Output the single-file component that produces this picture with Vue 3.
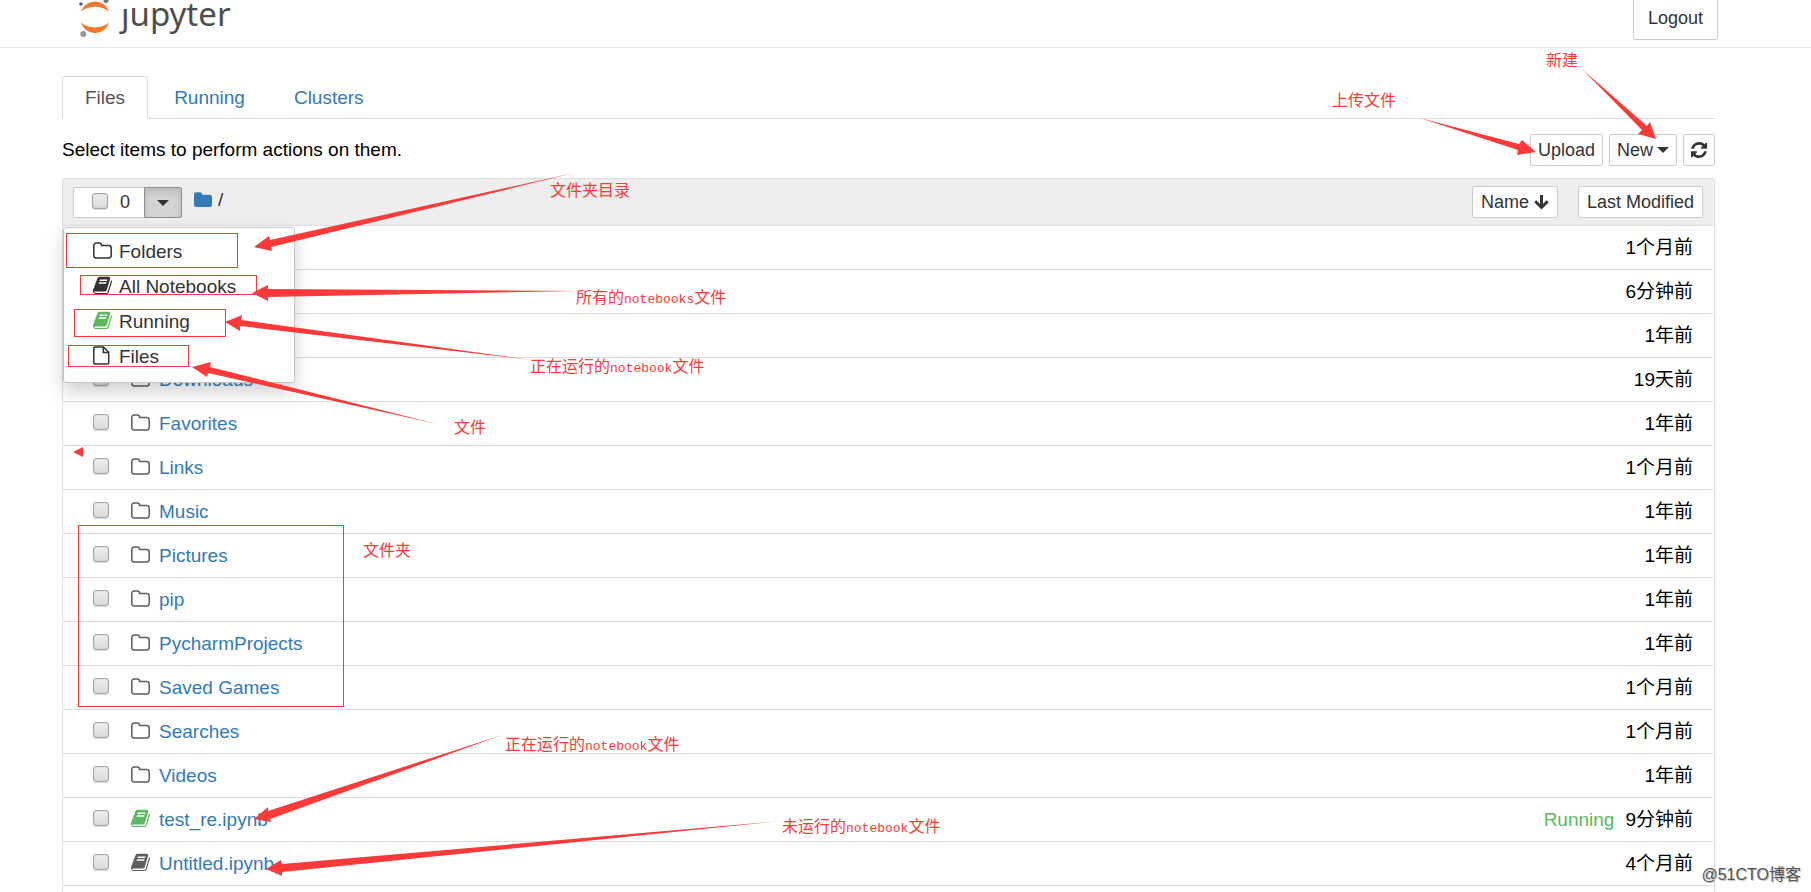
<script setup>
import { ref } from 'vue'

const files = ref([
  { name: '.conda', kind: 'folder', time: '1个月前' },
  { name: 'Contacts', kind: 'folder', time: '6分钟前' },
  { name: 'Desktop', kind: 'folder', time: '1年前' },
  { name: 'Downloads', kind: 'folder', time: '19天前' },
  { name: 'Favorites', kind: 'folder', time: '1年前' },
  { name: 'Links', kind: 'folder', time: '1个月前' },
  { name: 'Music', kind: 'folder', time: '1年前' },
  { name: 'Pictures', kind: 'folder', time: '1年前' },
  { name: 'pip', kind: 'folder', time: '1年前' },
  { name: 'PycharmProjects', kind: 'folder', time: '1年前' },
  { name: 'Saved Games', kind: 'folder', time: '1个月前' },
  { name: 'Searches', kind: 'folder', time: '1个月前' },
  { name: 'Videos', kind: 'folder', time: '1年前' },
  { name: 'test_re.ipynb', kind: 'book', time: '9分钟前', running: true },
  { name: 'Untitled.ipynb', kind: 'book', time: '4个月前' },
])

const filters = [
  { label: 'Folders', kind: 'folder' },
  { label: 'All Notebooks', kind: 'book' },
  { label: 'Running', kind: 'book', running: true },
  { label: 'Files', kind: 'file' },
]
</script>

<template>
  <svg class="defs" aria-hidden="true">
    <symbol id="i-folder" viewBox="0 0 19 17">
      <path d="M.8 3.4A2.4 2.4 0 0 1 3.2 1h3.2a2.2 2.2 0 0 1 2.2 2.2v.4h7.2a2.4 2.4 0 0 1 2.4 2.4v7.6a2.4 2.4 0 0 1-2.4 2.4H3.2a2.4 2.4 0 0 1-2.4-2.4z" fill="none" stroke="currentColor" stroke-width="1.5" />
    </symbol>
    <symbol id="i-book" viewBox="0 -20 1664 1540" preserveAspectRatio="xMinYMid meet">
      <path fill="currentColor" d="M1639 314q40 57 18 129l-275 906q-19 64-76.500 107.500T1183 1500H260q-77 0-148.500-53.500T12 1315q-24-67-2-127 0-4 3-27t4-37q1-8-3-21.500t-3-19.500q2-11 8-21t16.500-23.500T52 1015q23-38 45-91.500t30-91.500q3-10 .5-30t-.5-28q3-11 17-28t17-23q21-36 42-92t25-90q1-9-2.500-32t.5-28q4-13 22-30.500t22-22.500q19-26 42.500-84.500T340 277q1-8-3-25.500t-2-26.500q2-8 9-18t18-23 17-21q8-12 16.500-30.500T411 97t16-36 19.500-32T473 5.500t36-11.500 47.500 5.500L555 2q38-9 51-9h761q74 0 114 56t18 130l-274 906q-36 119-71.500 153.500T1025 1273H156q-27 0-38 15-11 16-1 43 24 70 144 70h923q29 0 56-15.500t35-41.500l300-987q7-22 5-57 38 15 59 43zM575 316q-4 13 2 22.500t20 9.500h608q13 0 25.500-9.500T1247 316l21-64q4-13-2-22.500t-20-9.500H638q-13 0-25.500 9.500T596 252zm-83 256q-4 13 2 22.500t20 9.500h608q13 0 25.500-9.500T1164 572l21-64q4-13-2-22.500t-20-9.500H555q-13 0-25.500 9.500T513 508z" />
    </symbol>
    <symbol id="i-file" viewBox="0 0 17 19" preserveAspectRatio="xMinYMid meet">
      <path d="M1.800 1H10.500L15.700 6.200V16.900A1 1 0 0 1 14.700 18H1.800A1 1 0 0 1 .8 17V2A1 1 0 0 1 1.800 1zM10.300 1V6.400H15.700" fill="none" stroke="currentColor" stroke-width="1.500" />
    </symbol>
  </svg>

  <div class="page">
    <header class="top">
      <a class="logo" href="#" aria-label="jupyter">
        <svg width="34" height="42" viewBox="0 0 34 42">
          <path d="M4 16.500C9 3 27 3 32 16.500C25 10 11 10 4 16.500z" fill="#f37726" />
          <path d="M4 27.500C9 41.500 27 41.500 32 27.500C25 34 11 34 4 27.500z" fill="#f37726" />
          <circle cx="4" cy="9" r="1.800" fill="#616161" />
          <circle cx="29" cy="5.500" r="2.500" fill="#767677" />
          <circle cx="6.300" cy="39" r="3" fill="#989798" />
        </svg>
        <span class="word"><span class="jay">j</span>upyter</span>
      </a>
      <button class="btn logout" type="button">Logout</button>
    </header>

    <main class="main">
      <nav class="tabs">
        <a class="tab active" href="#files">Files</a>
        <a class="tab" href="#running">Running</a>
        <a class="tab" href="#clusters">Clusters</a>
      </nav>

      <div class="toolbar">
        <span>Select items to perform actions on them.</span>
        <div class="actions">
          <button class="btn" type="button">Upload</button>
          <button class="btn" type="button">New <i class="caret"></i></button>
          <button class="btn" type="button" aria-label="Refresh">
            <svg width="16" height="16" viewBox="0 0 1536 1536">
              <path fill="currentColor" d="M1511 928q0 5-1 7-64 268-268 434.500T764 1536q-146 0-282.500-55T238 1324l-129 129q-19 19-45 19t-45-19-19-45V960q0-26 19-45t45-19h448q26 0 45 19t19 45-19 45l-137 137q71 66 161 102t187 36q134 0 250-65t186-179q11-17 53-117 8-23 30-23h192q13 0 22.500 9.500t9.500 22.500zm25-800v448q0 26-19 45t-45 19h-448q-26 0-45-19t-19-45 19-45l138-138Q969 256 768 256q-134 0-250 65T332 500q-11 17-53 117-8 23-30 23H50q-13 0-22.500-9.500T18 608v-7q65-268 270-434.500T768 0q146 0 284 55.500T1297 212l130-129q19-19 45-19t45 19 19 45z" />
            </svg>
          </button>
        </div>
      </div>

      <section class="list">
        <div class="list-head">
          <div class="select-group">
            <label class="select-all"><input class="check" type="checkbox" />0</label>
            <button class="toggle" type="button" aria-label="Select by type"><i class="caret"></i></button>
            <div class="menu">
              <a v-for="f in filters" :key="f.label" class="menu-item" href="#">
                <svg class="icon" :class="{ running: f.running }"><use :href="'#i-' + f.kind" /></svg>{{ f.label }}
              </a>
            </div>
          </div>
          <a class="crumb" href="#" aria-label="Home">
            <svg width="18" height="16" viewBox="0 0 18 16">
              <path fill="currentColor" d="M0 2.500A2.300 2.300 0 0 1 2.300.2h3.600a2.300 2.300 0 0 1 2.300 2.300v.3h7.500A2.300 2.300 0 0 1 18 5.100v7.600a2.300 2.300 0 0 1-2.300 2.300H2.300A2.300 2.300 0 0 1 0 12.700z" />
            </svg>
          </a>
          <span class="slash">/</span>
          <div class="sorts">
            <button class="btn" type="button">
              Name
              <svg width="15" height="15" viewBox="0 0 15 15">
                <path d="M7.500 0V12M1.300 6.300L7.500 12.500L13.700 6.300" fill="none" stroke="currentColor" stroke-width="3" />
              </svg>
            </button>
            <button class="btn" type="button">Last Modified</button>
          </div>
        </div>

        <div v-for="f in files" :key="f.name" class="row">
          <input class="check" type="checkbox" :aria-label="f.name" />
          <svg class="icon" :class="{ running: f.running }"><use :href="'#i-' + f.kind" /></svg>
          <a class="name" href="#">{{ f.name }}</a>
          <span v-if="f.running" class="state">Running</span>
          <span class="time">{{ f.time }}</span>
        </div>
        <div class="row"></div>
      </section>
    </main>

    <div class="notes left">
      <svg class="arrows" width="1000" height="892">
        <path d="M254 247L269 236L270 240L574 173L271 247L272 251z" />
        <path d="M252 293L268 285V289L578 291L268 297V301z" />
        <path d="M225 322L242 315L241 320L532 360L240 326V331z" />
        <path d="M192 367L211 362L210 367L437 424L208 373L207 377z" />
        <path d="M73 452L83 447V457z" />
        <path d="M254 819L268 807V811L502 735L270 819L271 822z" />
        <path d="M266 869L281 860L282 864L782 821L282 872V876z" />
      </svg>
      <i class="box b1"></i>
      <i class="box b2"></i>
      <i class="box b3"></i>
      <i class="box b4"></i>
      <i class="box b5"></i>
      <span class="note n1">文件夹目录</span>
      <span class="note n2">所有的<b>notebooks</b>文件</span>
      <span class="note n3">正在运行的<b>notebook</b>文件</span>
      <span class="note n4">文件</span>
      <span class="note n5">文件夹</span>
      <span class="note n6">正在运行的<b>notebook</b>文件</span>
      <span class="note n7">未运行的<b>notebook</b>文件</span>
    </div>
    <div class="notes right">
      <svg class="arrows" width="511" height="240">
        <path d="M120 118L219 144L222 140L236 152L217 155L218 150z" />
        <path d="M283 70L347 126L350 122L356 139L338 134L342 130z" />
      </svg>
      <span class="note n8">新建</span>
      <span class="note n9">上传文件</span>
    </div>
    <span class="mark">@51CTO博客</span>
  </div>
</template>

<style>
body { margin: 0; background: #fff; }
</style>

<style scoped>
* { box-sizing: border-box; }
.defs { position: absolute; width: 0; height: 0; }
.page {
  position: relative;
  height: 100vh;
  overflow: hidden;
  font-family: "Liberation Sans", Arial, "Noto Sans CJK SC", sans-serif;
  font-size: 19px;
  line-height: 28px;
  color: #000;
}
a { color: #337ab7; text-decoration: none; }

.top {
  display: flex;
  justify-content: space-between;
  align-items: flex-start;
  height: 48px;
  padding: 0 93px 0 77px;
  border-bottom: 1px solid #e7e7e7;
}
.logo { display: flex; margin-top: -5px; color: #4e4e4e; }
.word {
  margin-left: 10px;
  font: 33px/38px "Noto Sans", "Open Sans", sans-serif;
}
.jay { display: inline-block; clip-path: inset(14px -8px -8px -8px); }
.btn {
  display: flex;
  align-items: center;
  justify-content: center;
  gap: 5px;
  height: 32px;
  padding: 0 8px;
  border: 1px solid #ccc;
  border-radius: 2px;
  background: #fff;
  color: #333;
  font: 18px/28px "Liberation Sans", Arial, sans-serif;
}
.logout { height: 50px; padding: 0 14px; margin-top: -10px; padding-top: 6px; }

.main { padding: 28px 96px 0 62px; }
.tabs {
  display: flex;
  gap: 3px;
  height: 43px;
  border-bottom: 1px solid #ddd;
}
.tab {
  height: 43px;
  padding: 7px 22px 0;
  border: 1px solid transparent;
  border-radius: 3px 3px 0 0;
}
.tab.active {
  border-color: #ddd;
  border-bottom-color: #fff;
  background: #fff;
  color: #555;
}
.toolbar {
  display: flex;
  justify-content: space-between;
  align-items: center;
  height: 59px;
  padding-top: 2px;
}
.actions { display: flex; gap: 6px; }
.actions .btn { padding: 0 7px; gap: 4px; }
.caret {
  border-top: 6px solid currentColor;
  border-left: 6px solid transparent;
  border-right: 6px solid transparent;
}

.list {
  border: 1px solid #ddd;
  border-radius: 3px;
  padding-right: 1px;
}
.list-head {
  display: flex;
  align-items: center;
  height: 47px;
  padding: 0 10px;
  background: #eee;
  border-bottom: 1px solid #ddd;
}
.select-group { position: relative; display: flex; height: 31px; }
.select-all {
  display: flex;
  align-items: center;
  gap: 12px;
  width: 71px;
  padding-left: 18px;
  border: 1px solid #ccc;
  border-right: 0;
  border-radius: 2px 0 0 2px;
  background: #fff;
  color: #333;
  font-size: 18px;
}
.toggle {
  display: flex;
  align-items: center;
  justify-content: center;
  width: 38px;
  padding: 2px 0 0;
  border: 1px solid #8c8c8c;
  border-radius: 0 2px 2px 0;
  background: #d4d4d4;
  box-shadow: inset 0 4px 7px rgba(0, 0, 0, .125);
  color: #333;
}
.check {
  appearance: none;
  flex: none;
  width: 16px;
  height: 16px;
  margin: 0 0 3px;
  border: 1px solid #a6a6a6;
  border-radius: 3px;
  background: linear-gradient(#ececec, #dcdcdc);
  box-shadow: 0 1px 1px rgba(0, 0, 0, .15), inset 0 0 1px #999;
}
.menu {
  position: absolute;
  z-index: 2;
  top: 40px;
  left: -10px;
  width: 232px;
  padding: 7px 0;
  border: 1px solid #c4c4c4;
  border-radius: 3px;
  background: #fff;
  box-shadow: 0 9px 18px rgba(0, 0, 0, .18);
}
.menu-item {
  display: flex;
  align-items: center;
  gap: 7px;
  height: 35px;
  padding-left: 29px;
  color: #333;
}
.crumb { display: flex; margin: -4px 6px 0 12px; }
.slash { color: #333; margin-top: -4px; }
.sorts { display: flex; gap: 20px; margin-left: auto; }

.row {
  display: flex;
  align-items: center;
  height: 44px;
  padding: 0 20px 0 30px;
  border-bottom: 1px solid #ddd;
}
.icon { flex: none; width: 19px; height: 19px; margin-bottom: 3px; color: #5e5e5e; }
.menu-item .icon { color: #333; }
.icon.running, .menu-item .icon.running { color: #5cb85c; }
.row .icon { margin-left: 22px; margin-right: 9px; }
.state { margin-left: auto; color: #5cb85c; }
.time { margin-left: auto; }
.state + .time { margin-left: 11px; }

.notes { position: absolute; z-index: 3; top: 0; color: #fc3a3a; pointer-events: none; }
.notes.left { left: 0; }
.notes.right { right: 0; width: 511px; }
.arrows { display: block; fill: #fc3a3a; }
.box { position: absolute; border: 1px solid #fc3a3a; }
.b1 { left: 66px; top: 233px; width: 172px; height: 35px; }
.b2 { left: 80px; top: 275px; width: 177px; height: 20px; }
.b3 { left: 74px; top: 309px; width: 152px; height: 28px; }
.b4 { left: 68px; top: 345px; width: 121px; height: 22px; }
.b5 { left: 78px; top: 525px; width: 266px; height: 182px; }
.note {
  position: absolute;
  white-space: nowrap;
  font: 16px/20px "Noto Sans CJK SC", sans-serif;
}
.note b { font: 13px/20px "Liberation Mono", monospace; }
.n1 { left: 550px; top: 179px; }
.n2 { left: 576px; top: 286px; }
.n3 { left: 530px; top: 355px; }
.n4 { left: 454px; top: 416px; }
.n5 { left: 363px; top: 539px; }
.n6 { left: 505px; top: 733px; }
.n7 { left: 782px; top: 815px; }
.n8 { left: 246px; top: 49px; }
.n9 { left: 32px; top: 89px; }
.mark {
  position: absolute;
  right: 10px;
  bottom: 7px;
  color: #555;
  font-size: 16px;
  line-height: 20px;
  text-shadow: 1px 1px 1px #bbb;
}
</style>
